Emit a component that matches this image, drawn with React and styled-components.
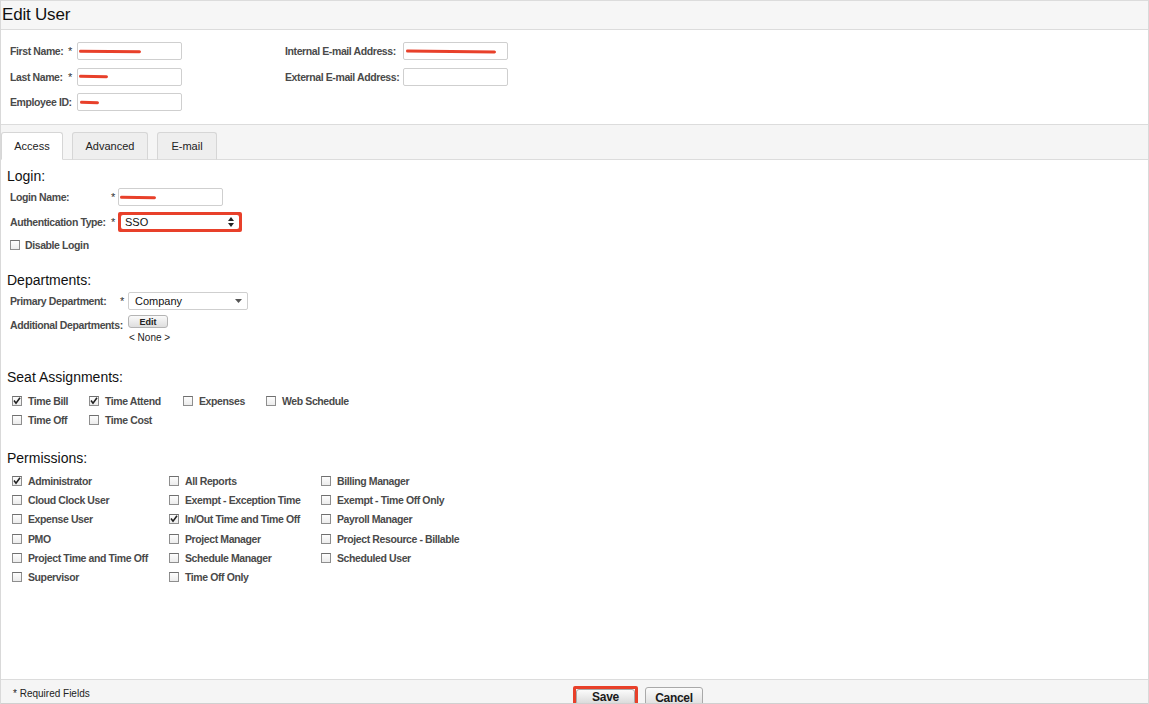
import styled, { createGlobalStyle } from "styled-components";

const GlobalStyle = createGlobalStyle`
  html, body {
    margin: 0;
    padding: 0;
    background: #fff;
  }
  body {
    font-family: "Liberation Sans", Arial, sans-serif;
    color: #222;
  }
`;

const Page = styled.div`
  box-sizing: border-box;
  width: 1149px;
  height: 704px;
  overflow: hidden;
  display: flex;
  flex-direction: column;
  border-left: 1px solid #d9d9d9;
  border-right: 1px solid #d9d9d9;
`;

const Header = styled.div`
  height: 28px;
  flex-shrink: 0;
  display: flex;
  align-items: center;
  background: #f6f6f6;
  border-top: 1px solid #dcdcdc;
  border-bottom: 1px solid #dcdcdc;
  padding-left: 1px;
`;

const Title = styled.h1`
  margin: 0;
  font-size: 17px;
  font-weight: normal;
  color: #111;
  letter-spacing: -0.2px;
`;

const TopForm = styled.div`
  height: 94px;
  flex-shrink: 0;
  box-sizing: border-box;
  padding: 12px 0 0 9px;
  display: flex;
  gap: 103px;
`;

const FieldGrid = styled.div`
  display: grid;
  grid-template-columns: ${(p) => p.$cols};
  grid-auto-rows: 18px;
  row-gap: 7.5px;
  align-items: center;
`;

const Label = styled.span`
  font-size: 10.5px;
  letter-spacing: -0.4px;
  font-weight: bold;
  color: #4a4a4a;
  white-space: nowrap;
  align-self: ${(p) => (p.$top ? "start" : "auto")};
  padding-top: ${(p) => p.$top || 0}px;
`;

const Star = styled.span`
  font-size: 11px;
  color: #333;
`;

const TextBox = styled.div`
  box-sizing: border-box;
  width: ${(p) => p.$w}px;
  height: ${(p) => p.$h || 18}px;
  border: 1px solid #cfcfcf;
  border-radius: 2px;
  background: #fff;
  display: flex;
  align-items: center;
  padding-left: ${(p) => p.$pad || 1}px;
`;

const Scribble = styled.span`
  display: inline-block;
  width: ${(p) => p.$w}px;
  height: 3px;
  border-radius: 2px;
  background: #e8402a;
  transform: rotate(${(p) => p.$tilt || 0}deg);
`;

const TabBar = styled.div`
  height: 36px;
  flex-shrink: 0;
  box-sizing: border-box;
  background: #f5f5f5;
  border-top: 1px solid #dcdcdc;
  border-bottom: 1px solid #dcdcdc;
  display: flex;
  align-items: flex-end;
  gap: 9px;
`;

const Tab = styled.div`
  box-sizing: border-box;
  width: ${(p) => p.$w}px;
  height: 28px;
  margin-bottom: -1px;
  display: flex;
  align-items: center;
  justify-content: center;
  font-size: 11px;
  color: #222;
  border: 1px solid #d6d6d6;
  border-bottom: ${(p) => (p.$active ? "1px solid #fff" : "1px solid #dcdcdc")};
  border-radius: 3px 3px 0 0;
  background: ${(p) => (p.$active ? "#fff" : "#eeeeee")};
`;

const Content = styled.div`
  flex: 1;
  padding: 8px 0 0 6px;
  display: flex;
  flex-direction: column;
`;

const Heading = styled.h2`
  margin: ${(p) => p.$top || 0}px 0 0 0;
  font-size: 14px;
  line-height: 16px;
  font-weight: normal;
  color: #111;
`;

const FormRow = styled.div`
  display: grid;
  grid-template-columns: ${(p) => p.$cols};
  align-items: center;
  height: ${(p) => p.$h}px;
  margin-top: ${(p) => p.$top || 0}px;
  padding-left: 3px;
`;

const FieldStack = styled.div`
  display: flex;
  flex-direction: column;
  align-items: flex-start;
  align-self: start;
  gap: 4px;
  padding-top: 5px;
`;

const RedFrame = styled.div`
  box-sizing: border-box;
  border: 3px solid #e8402a;
  border-radius: 2px;
  display: inline-flex;
  width: ${(p) => p.$w}px;
  height: ${(p) => p.$h}px;
  background: #e8402a;
`;

const SelectBox = styled.div`
  box-sizing: border-box;
  flex: 1;
  width: ${(p) => (p.$w ? p.$w + "px" : "auto")};
  height: ${(p) => (p.$h ? p.$h + "px" : "auto")};
  background: #fff;
  border: ${(p) => (p.$plain ? "none" : "1px solid #cfcfcf")};
  border-radius: 2px;
  display: flex;
  align-items: center;
  justify-content: space-between;
  padding: 0 5px 0 ${(p) => p.$padLeft || 6}px;
  font-size: 11px;
  color: #111;
`;

const SmallButton = styled.div`
  box-sizing: border-box;
  width: 40px;
  height: 13px;
  border: 1px solid #b4b4b4;
  border-radius: 3px;
  background: linear-gradient(#fafafa, #dedede);
  font-size: 9px;
  font-weight: bold;
  display: flex;
  align-items: center;
  justify-content: center;
  color: #222;
`;

const NoneText = styled.span`
  font-size: 10px;
  color: #222;
  padding-left: 1px;
`;

const CheckGrid = styled.div`
  display: grid;
  grid-template-columns: ${(p) => p.$cols};
  grid-auto-rows: ${(p) => p.$row}px;
  margin-top: ${(p) => p.$top || 0}px;
  padding-left: ${(p) => p.$left || 5}px;
`;

const CheckItem = styled.div`
  display: flex;
  align-items: center;
  gap: ${(p) => p.$gap || 6}px;
  font-size: 10.5px;
  letter-spacing: -0.4px;
  font-weight: bold;
  color: #4a4a4a;
  white-space: nowrap;
`;

const Box = styled.span`
  box-sizing: border-box;
  width: 10px;
  height: 10px;
  border: 1px solid #8e8e8e;
  border-top-color: #6f6f6f;
  background: linear-gradient(#fdfdfd, #ececec);
  display: inline-flex;
  align-items: center;
  justify-content: center;
  flex-shrink: 0;
`;

const Footer = styled.div`
  height: 25px;
  flex-shrink: 0;
  box-sizing: border-box;
  background: #f5f5f5;
  border-top: 1px solid #dcdcdc;
  border-bottom: 1px solid #d0d0d0;
  display: grid;
  grid-template-columns: 560px auto;
  align-items: flex-start;
  padding-left: 12px;
  overflow: hidden;
`;

const FooterNote = styled.span`
  font-size: 10px;
  color: #222;
  padding-top: 8px;
`;

const Buttons = styled.div`
  display: flex;
  gap: 7px;
  padding-top: 6px;
`;

const SaveFrame = styled.div`
  box-sizing: border-box;
  border: 3px solid #e8402a;
  border-radius: 2px;
  width: 65px;
  height: 22px;
  display: flex;
`;

const Button = styled.div`
  box-sizing: border-box;
  flex: ${(p) => (p.$fill ? 1 : "none")};
  width: ${(p) => (p.$w ? p.$w + "px" : "auto")};
  height: ${(p) => (p.$h ? p.$h + "px" : "auto")};
  margin-top: ${(p) => p.$top || 0}px;
  border: 1px solid #a9a9a9;
  border-radius: 3px;
  background: linear-gradient(#fbfbfb, #d9d9d9);
  font-size: 12px;
  font-weight: bold;
  letter-spacing: -0.3px;
  color: #1a1a1a;
  display: flex;
  align-items: center;
  justify-content: center;
`;

function Checkbox({ checked }) {
  return (
    <Box>
      {checked && (
        <svg width="8" height="8" viewBox="0 0 8 8">
          <path d="M1 3.6 L3 6.2 L7 0.8" fill="none" stroke="#222" strokeWidth="1.6" />
        </svg>
      )}
    </Box>
  );
}

function Check({ label, checked, gap }) {
  return (
    <CheckItem $gap={gap}>
      <Checkbox checked={checked} />
      {label}
    </CheckItem>
  );
}

function UpDown() {
  return (
    <svg width="6" height="10" viewBox="0 0 6 10">
      <path d="M0 4 L3 0 L6 4 Z M0 6 L3 10 L6 6 Z" fill="#222" />
    </svg>
  );
}

function Caret() {
  return (
    <svg width="7" height="4" viewBox="0 0 7 4">
      <path d="M0 0 L7 0 L3.5 4 Z" fill="#555" />
    </svg>
  );
}

const seats = [
  ["Time Bill", true],
  ["Time Attend", true],
  ["Expenses", false],
  ["Web Schedule", false],
  ["Time Off", false],
  ["Time Cost", false],
];

const permissions = [
  ["Administrator", true],
  ["All Reports", false],
  ["Billing Manager", false],
  ["Cloud Clock User", false],
  ["Exempt - Exception Time", false],
  ["Exempt - Time Off Only", false],
  ["Expense User", false],
  ["In/Out Time and Time Off", true],
  ["Payroll Manager", false],
  ["PMO", false],
  ["Project Manager", false],
  ["Project Resource - Billable", false],
  ["Project Time and Time Off", false],
  ["Schedule Manager", false],
  ["Scheduled User", false],
  ["Supervisor", false],
  ["Time Off Only", false],
];

export default function App() {
  return (
    <>
      <GlobalStyle />
      <Page>
        <Header>
          <Title>Edit User</Title>
        </Header>

        <TopForm>
          <FieldGrid $cols="58px 9px 105px">
            <Label>First Name:</Label>
            <Star>*</Star>
            <TextBox $w={105}>
              <Scribble $w={62} $tilt={0.5} />
            </TextBox>
            <Label>Last Name:</Label>
            <Star>*</Star>
            <TextBox $w={105}>
              <Scribble $w={29} $tilt={1} />
            </TextBox>
            <Label>Employee ID:</Label>
            <span />
            <TextBox $w={105} $pad={2}>
              <Scribble $w={19} $tilt={1} />
            </TextBox>
          </FieldGrid>
          <FieldGrid $cols="118px 105px">
            <Label>Internal E-mail Address:</Label>
            <TextBox $w={105} $pad={2}>
              <Scribble $w={90} $tilt={0.5} />
            </TextBox>
            <Label>External E-mail Address:</Label>
            <TextBox $w={105} />
          </FieldGrid>
        </TopForm>

        <TabBar>
          <Tab $w={62} $active>Access</Tab>
          <Tab $w={76}>Advanced</Tab>
          <Tab $w={60}>E-mail</Tab>
        </TabBar>

        <Content>
          <Heading>Login:</Heading>
          <FormRow $cols="101px 7px auto" $h={20} $top={3}>
            <Label>Login Name:</Label>
            <Star>*</Star>
            <TextBox $w={105} $h={18} $pad={1}>
              <Scribble $w={36} $tilt={1} />
            </TextBox>
          </FormRow>
          <FormRow $cols="101px 7px auto" $h={21} $top={4}>
            <Label>Authentication Type:</Label>
            <Star>*</Star>
            <RedFrame $w={124} $h={20}>
              <SelectBox $plain $padLeft={4}>
                SSO
                <UpDown />
              </SelectBox>
            </RedFrame>
          </FormRow>
          <CheckGrid $cols="auto" $row={14} $top={6} $left={3}>
            <Check label="Disable Login" gap={5} />
          </CheckGrid>

          <Heading $top={20}>Departments:</Heading>
          <FormRow $cols="110px 8px auto" $h={19} $top={3}>
            <Label>Primary Department:</Label>
            <Star>*</Star>
            <SelectBox $w={120} $h={18}>
              Company
              <Caret />
            </SelectBox>
          </FormRow>
          <FormRow $cols="118px auto" $h={40} $top={0}>
            <Label $top={9}>Additional Departments:</Label>
            <FieldStack>
              <SmallButton>Edit</SmallButton>
              <NoneText>&lt; None &gt;</NoneText>
            </FieldStack>
          </FormRow>

          <Heading $top={19}>Seat Assignments:</Heading>
          <CheckGrid $cols="77px 94px 83px auto" $row={19.2} $top={6}>
            {seats.map(([label, checked]) => (
              <Check key={label} label={label} checked={checked} />
            ))}
          </CheckGrid>

          <Heading $top={21}>Permissions:</Heading>
          <CheckGrid $cols="157px 152px auto" $row={19.2} $top={5}>
            {permissions.map(([label, checked]) => (
              <Check key={label} label={label} checked={checked} />
            ))}
          </CheckGrid>
        </Content>

        <Footer>
          <FooterNote>* Required Fields</FooterNote>
          <Buttons>
            <SaveFrame>
              <Button $fill>Save</Button>
            </SaveFrame>
            <Button $w={58} $h={22} $top={1}>
              Cancel
            </Button>
          </Buttons>
        </Footer>
      </Page>
    </>
  );
}
